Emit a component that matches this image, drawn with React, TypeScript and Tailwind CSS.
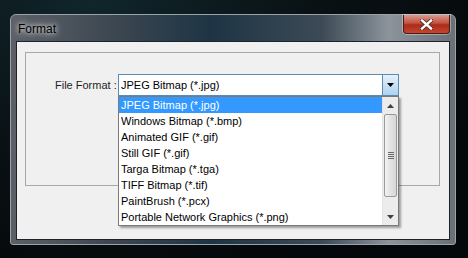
const items = [
  'JPEG Bitmap (*.jpg)',
  'Windows Bitmap (*.bmp)',
  'Animated GIF (*.gif)',
  'Still GIF (*.gif)',
  'Targa Bitmap (*.tga)',
  'TIFF Bitmap (*.tif)',
  'PaintBrush (*.pcx)',
  'Portable Network Graphics (*.png)',
];

function CloseButton() {
  return (
    <div className="absolute right-[5px] top-0 w-[47px] h-[19px] rounded-b-[4px] border border-t-0 border-[#4a1a14] bg-[linear-gradient(#d99a8e_0%,#c2513f_45%,#a92d1b_55%,#c8452e_100%)] flex items-center justify-center shadow-[0_0_0_1px_rgba(255,255,255,0.35)]">
      <svg width="13" height="11" viewBox="0 0 13 11">
        <path d="M2 1.5 L11 9.5 M11 1.5 L2 9.5" stroke="#4a2a26" strokeWidth="4" strokeLinecap="square" />
        <path d="M2 1.5 L11 9.5 M11 1.5 L2 9.5" stroke="#ffffff" strokeWidth="2.4" strokeLinecap="square" />
      </svg>
    </div>
  );
}

function ScrollBar() {
  return (
    <div className="w-[16px] flex flex-col bg-[#ececec] border-l border-[#e4e4e4]">
      <div className="h-[17px] flex items-center justify-center">
        <svg width="7" height="4" viewBox="0 0 7 4"><path d="M3.5 0 L7 4 L0 4 Z" fill="#404040" /></svg>
      </div>
      <div className="mx-[1px] h-[83px] rounded-[2px] border border-[#9a9a9a] bg-[linear-gradient(90deg,#f3f3f3,#e2e2e2_50%,#d6d6d6)] flex items-center justify-center">
        <div className="flex flex-col gap-[1px]">
          <div className="w-[6px] h-[1px] bg-[#6a6a6a]" />
          <div className="w-[6px] h-[1px] bg-[#6a6a6a]" />
          <div className="w-[6px] h-[1px] bg-[#6a6a6a]" />
          <div className="w-[6px] h-[1px] bg-[#6a6a6a]" />
        </div>
      </div>
      <div className="flex-1" />
      <div className="h-[17px] flex items-center justify-center">
        <svg width="7" height="4" viewBox="0 0 7 4"><path d="M0 0 L7 0 L3.5 4 Z" fill="#404040" /></svg>
      </div>
    </div>
  );
}

export default function App() {
  return (
    <div className="relative w-[468px] h-[258px] overflow-hidden bg-[radial-gradient(ellipse_at_20%_0%,#10262b_0%,#0a1216_40%,#05080a_80%)] font-['Liberation_Sans',Arial,sans-serif]">
      {/* window */}
      <div className="absolute left-[10px] top-[14px] w-[446px] h-[231px] rounded-t-[6px] rounded-b-[3px] border border-[#9aa2aa] bg-[linear-gradient(90deg,#5c6066_0%,#3a4550_25%,#1e3444_45%,#3c4a56_70%,#8c939b_85%,#6a7078_100%)] flex flex-col px-[5px] pb-[4px]">
        <div className="h-[26px] flex items-center pl-[2px] pt-[1px] text-[12px] text-black [text-shadow:0_0_8px_rgba(255,255,255,0.9),0_0_4px_rgba(255,255,255,0.8)]">
          Format
        </div>
        <CloseButton />
        {/* client */}
        <div className="flex-1 border border-[#1c232a] bg-[#f0f0f0] pt-[10px] pl-[8px] pr-[9px]">
          <div className="h-[134px] border border-[#a8a8a8] flex items-start pt-[21px] pl-[29px]">
            <div className="w-[63px] h-[22px] flex items-center whitespace-nowrap text-[11px] text-[#1e1e1e]">File Format :</div>
            <div className="relative w-[281px] h-[22px] border border-[#5b8bb3] bg-white flex">
              <div className="flex-1 flex items-center pl-[2px] text-[11px] text-black">JPEG Bitmap (*.jpg)</div>
              <div className="w-[16px] border-l border-[#5b8bb3] bg-[linear-gradient(#e6f2fb,#c8e1f5_50%,#aed3ef)] flex items-center justify-center">
                <svg width="7" height="4" viewBox="0 0 7 4"><path d="M0 0 L7 0 L3.5 4 Z" fill="#000" /></svg>
              </div>
              {/* dropdown list */}
              <div className="absolute left-[-1px] top-[21px] w-[281px] h-[130px] border border-[#7a7a7a] bg-white flex shadow-[2px_2px_2px_rgba(0,0,0,0.35)]">
                <div className="flex-1 flex flex-col">
                  {items.map((t, i) => (
                    <div
                      key={t}
                      className={`h-[16px] flex items-center pl-[2px] text-[11px] leading-none ${i === 0 ? 'bg-[#3399ff] text-white' : 'text-black'}`}
                    >
                      {t}
                    </div>
                  ))}
                </div>
                <ScrollBar />
              </div>
            </div>
          </div>
        </div>
      </div>
    </div>
  );
}
